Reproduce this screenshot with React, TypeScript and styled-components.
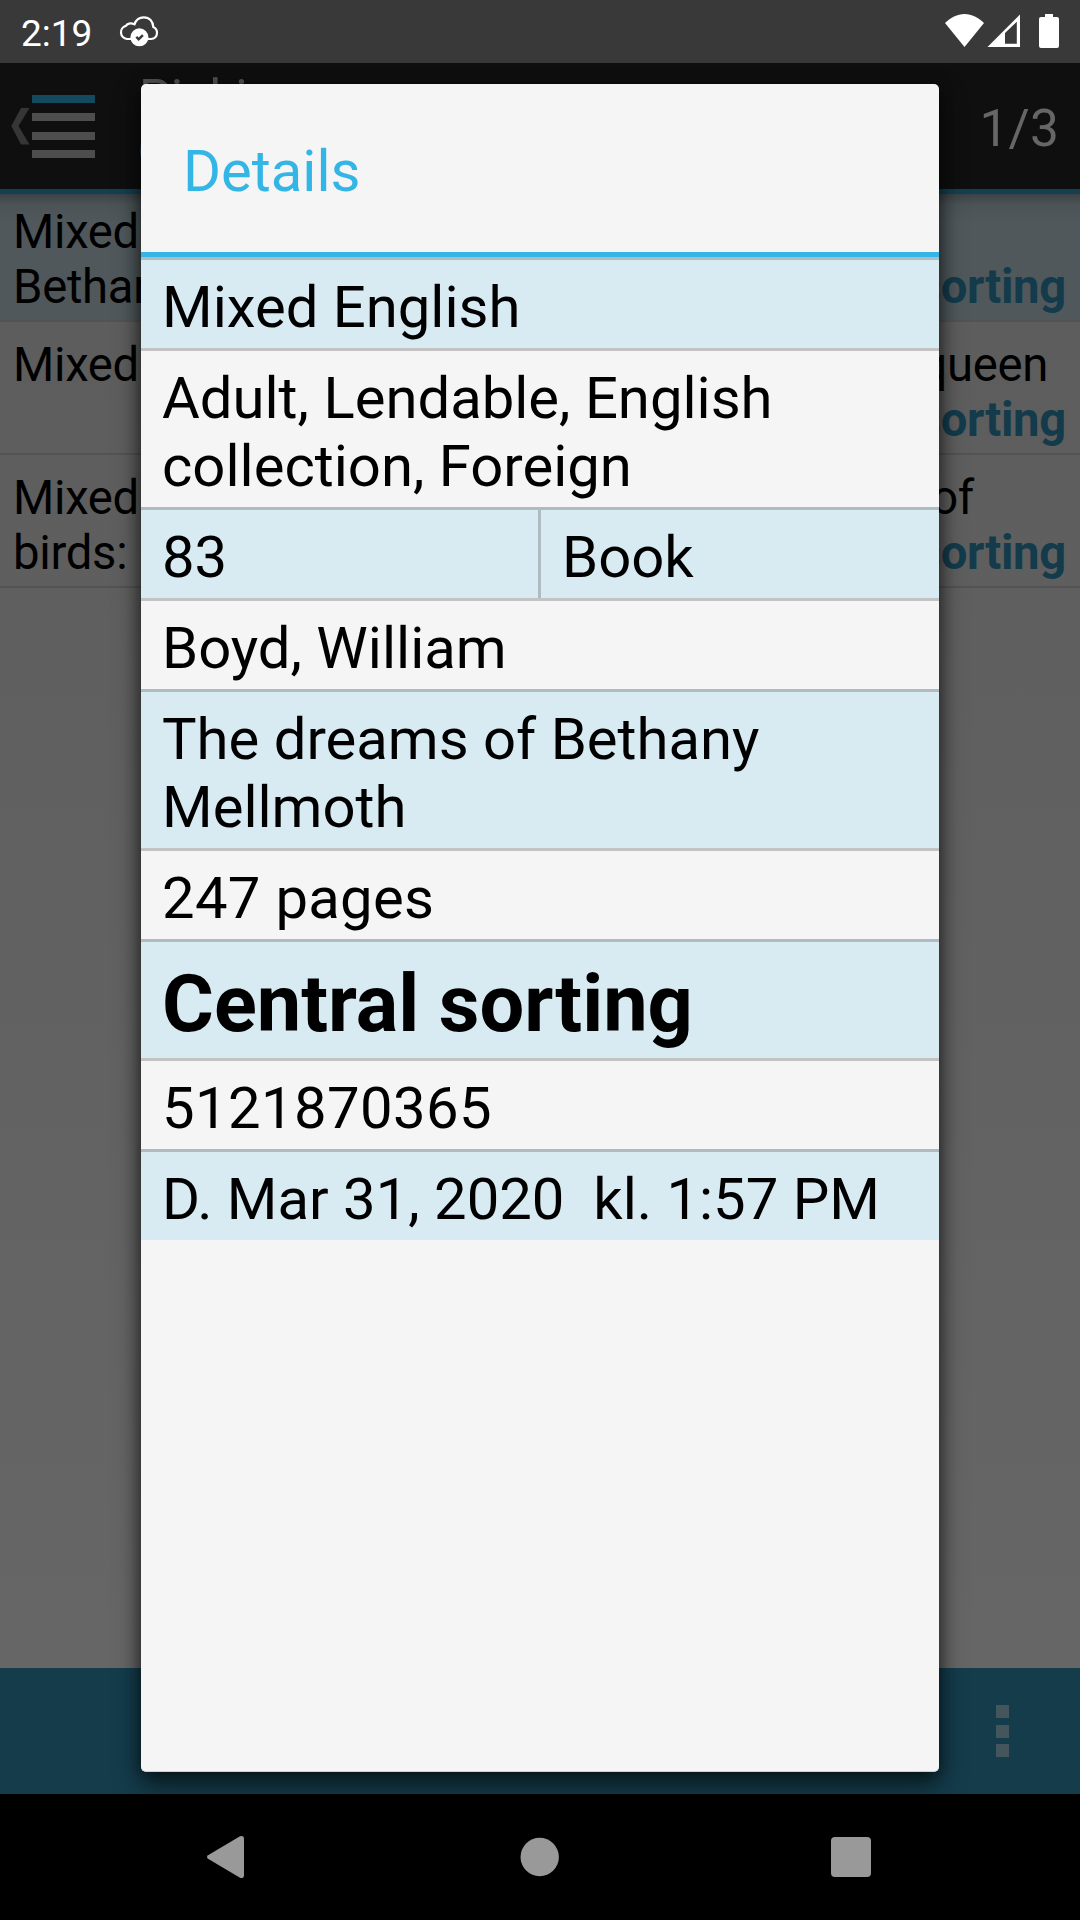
import React from "react";
import styled, { createGlobalStyle } from "styled-components";

const GlobalStyle = createGlobalStyle`
  *, *::before, *::after { box-sizing: border-box; }
  html, body { margin: 0; padding: 0; background: #000; }
`;

const Screen = styled.div`
  position: relative;
  width: 1080px;
  height: 1920px;
  overflow: hidden;
  display: flex;
  flex-direction: column;
  font-family: Roboto, sans-serif;
  color: #000;
`;

const StatusBar = styled.header`
  height: 63px;
  flex: none;
  display: flex;
  align-items: flex-start;
  background: #393939;
  color: #fff;
  padding: 0 20px;
`;

const Clock = styled.span`
  width: 99px;
  padding: 12px 0 0 1px;
  font-size: 37px;
  line-height: 44px;
`;

const CloudIcon = styled.svg`
  width: 40px;
  height: 32px;
  margin-top: 15px;
`;

const StatusIcons = styled.svg`
  width: 116px;
  height: 36px;
  margin: 13px 0 0 auto;
`;

const ActionBar = styled.div`
  height: 126px;
  flex: none;
  display: flex;
  background: #0f0f0f;
  padding-right: 21px;
`;

const MenuIcon = styled.svg`
  width: 138px;
  height: 126px;
  flex: none;
`;

const Titles = styled.div`
  flex: 1;
  padding: 5px 0 0 1px;
  color: #555;
`;

const Title = styled.div`
  font-size: 50.5px;
  line-height: 60px;
`;

const Subtitle = styled.div`
  font-size: 40px;
  line-height: 47px;
  text-indent: -1px;
`;

const Counter = styled.div`
  font-size: 51.5px;
  line-height: 126px;
  letter-spacing: 0.1px;
  color: #666;
  padding-top: 3px;
`;

const List = styled.main`
  flex: 1;
  background: linear-gradient(#5c5c5c, #666666);
`;

const Item = styled.div<{ $selected?: boolean }>`
  height: 133px;
  padding: 15px 14px 0 13px;
  border-bottom: 2px solid #535353;
  background: ${(p) => (p.$selected ? "linear-gradient(#134052 5px, #3c4245 5px, #4b5356 16px, #50585b 34px)" : "none")};
  font-size: 47.25px;
  line-height: 56px;
`;

const Line = styled.div<{ $inset?: number }>`
  display: flex;
  justify-content: space-between;
  height: 55px;
  white-space: nowrap;
  letter-spacing: -0.3px;
  padding-right: ${(p) => p.$inset ?? 0}px;
`;

const Place = styled.b`
  color: #133b4b;
  font-weight: 700;
  letter-spacing: -0.3px;
`;

const BottomBar = styled.div`
  height: 126px;
  flex: none;
  display: flex;
  flex-direction: column;
  align-items: flex-end;
  padding: 37px 71px 0 0;
  gap: 6.5px;
  background: #143c4b;
`;

const Dot = styled.span`
  width: 13px;
  height: 13px;
  background: #44555c;
`;

const NavBar = styled.nav`
  position: relative;
  z-index: 2;
  height: 126px;
  flex: none;
  display: flex;
  align-items: center;
  justify-content: space-between;
  padding: 0 209px 0 206px;
  background: #000;
`;

const NavIcon = styled.svg`
  width: 40px;
  height: 44px;
  fill: #999;
`;

const Dialog = styled.section`
  position: absolute;
  z-index: 1;
  left: 141px;
  top: 84px;
  width: 798px;
  height: 1688px;
  border-radius: 5px;
  background: #f5f5f5;
  overflow: hidden;
  box-shadow: 0 12px 26px rgba(0, 0, 0, 0.6), 0 1px 14px rgba(0, 0, 0, 0.38);
  border-bottom: 1px solid #c9d1d1;
`;

const DialogTitle = styled.h1`
  margin: 0;
  height: 173px;
  padding: 53px 42px 0;
  border-bottom: 5px solid #33b5e5;
  color: #33b5e5;
  font-size: 58px;
  line-height: 68px;
  font-weight: 400;
`;

const Row = styled.div<{ $tint?: boolean }>`
  display: flex;
  border-top: 3px solid ${(p) => (p.$tint ? "#aebcc1" : "#c3c3c3")};
  background: ${(p) => (p.$tint ? "#d8eaf2" : "#f5f5f5")};
  font-size: 58px;
  line-height: 68px;
`;

const Cell = styled.div<{ $tracking?: number }>`
  flex: 1 1 397px;
  padding: 13px 21px 7px;
  letter-spacing: ${(p) => p.$tracking ?? 0}px;
  white-space: pre-line;

  & + & {
    flex: 1 0 401px;
    border-left: 3px solid #aebcc1;
  }
`;

const Strong = styled(Cell)`
  padding: 14px 21px 6px;
  font-size: 79.3px;
  font-weight: 700;
  line-height: 96px;
`;

const items = [
  { first: "Mixed", firstEnd: "", inset: 0, second: "Bethany" },
  { first: "Mixed", firstEnd: "queen", inset: 18, second: "" },
  { first: "Mixed", firstEnd: "of", inset: 92, second: "birds:" },
];

const details: { cells: string[]; strong?: boolean; tracking?: number }[] = [
  { cells: ["Mixed English"] },
  { cells: ["Adult, Lendable, English\ncollection, Foreign"] },
  { cells: ["83", "Book"] },
  { cells: ["Boyd, William"] },
  { cells: ["The dreams of Bethany\nMellmoth"] },
  { cells: ["247 pages"], tracking: 0.3 },
  { cells: ["Central sorting"], strong: true },
  { cells: ["5121870365"], tracking: 0.4 },
  { cells: ["D. Mar 31, 2020 \u00a0kl. 1:57 PM"] },
];

export default function App() {
  return (
    <>
      <GlobalStyle />
      <Screen>
        <StatusBar>
          <Clock>2:19</Clock>
          <CloudIcon viewBox="0 0 40 32" fill="none" stroke="#fff" strokeWidth="2.2">
            <path d="M12 24H8A6.700 6.700 0 0 1 6.800 10.900C8 8.600 11.500 7.500 15.500 9.300C17 4.500 20.500 2.300 24.800 2.300C30.500 2.300 34 6.500 34.300 12C37 13.200 38 15.200 38 17.800C38 21.500 35.500 24 32 24H27" />
            <circle cx="20.4" cy="22.3" r="9" fill="#fff" stroke="none" />
            <path d="M17.300 21.800l2.400 2.400 4.200-4" stroke="#393939" strokeWidth="2.4" />
          </CloudIcon>
          <StatusIcons viewBox="0 0 116 36" fill="#fff">
            <path d="M1 10C7 4.500 13 1 20.500 1S34 4.500 40 10L20.500 34z" />
            <path
              fillRule="evenodd"
              d="M43.500 34L76 1.500V34zM61 20v10.800h11.800V8.700z"
            />
            <path d="M101 1h8v3h4a2 2 0 0 1 2 2v27a2 2 0 0 1-2 2H97a2 2 0 0 1-2-2V6a2 2 0 0 1 2-2h4z" />
          </StatusIcons>
        </StatusBar>

        <ActionBar>
          <MenuIcon viewBox="0 0 138 126">
            <path d="M21 45h8.500L18.500 63l11 18.500H21L11.300 63z" fill="#363636" />
            <rect x="32" y="32" width="63" height="8" fill="#134a60" />
            <path d="M32 50h63v8H32zM32 69h63v8H32zM32 87h63v8H32z" fill="#4d4d4d" />
          </MenuIcon>
          <Titles>
            <Title>Picking</Title>
            <Subtitle>C</Subtitle>
          </Titles>
          <Counter>1/3</Counter>
        </ActionBar>

        <List>
          {items.map((item, i) => (
            <Item key={i} $selected={i === 0}>
              <Line $inset={item.inset}>
                <span>{item.first}</span>
                <span>{item.firstEnd}</span>
              </Line>
              <Line>
                <span>{item.second}</span>
                <Place>Central sorting</Place>
              </Line>
            </Item>
          ))}
        </List>

        <BottomBar>
          <Dot />
          <Dot />
          <Dot />
        </BottomBar>

        <NavBar>
          <NavIcon viewBox="0 0 40 44">
            <path d="M2 20.200L34 1.200Q38 0 38 4V40Q38 44 34 42.800L2 23.800Q0 22 2 20.200z" />
          </NavIcon>
          <NavIcon viewBox="0 0 40 44">
            <circle cx="20.7" cy="22" r="19.2" />
          </NavIcon>
          <NavIcon viewBox="0 0 40 44">
            <rect x="0" y="2" width="40" height="40" rx="4" />
          </NavIcon>
        </NavBar>

        <Dialog>
          <DialogTitle>Details</DialogTitle>
          {details.map((row, i) => (
            <Row key={i} $tint={i % 2 === 0}>
              {row.cells.map((text) =>
                row.strong ? (
                  <Strong key={text}>{text}</Strong>
                ) : (
                  <Cell key={text} $tracking={row.tracking}>
                    {text}
                  </Cell>
                )
              )}
            </Row>
          ))}
        </Dialog>
      </Screen>
    </>
  );
}
